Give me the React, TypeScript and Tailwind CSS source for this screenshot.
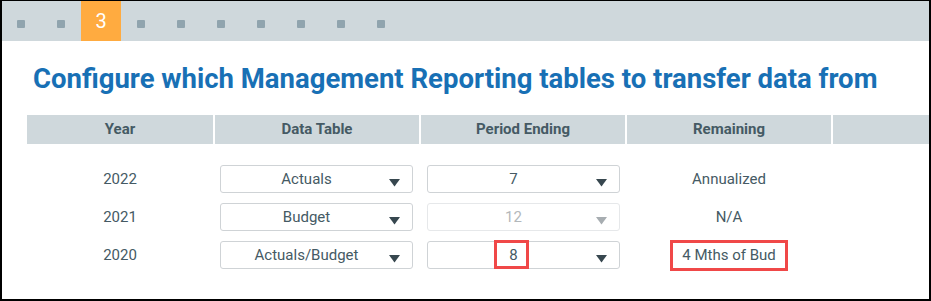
import React from "react";

const Arrow = ({ disabled }: { disabled?: boolean }) => (
  <svg width="11" height="8" viewBox="0 0 11 8" className="mt-[7px]">
    <polygon points="0,0 11,0 5.5,7.5" fill={disabled ? "#a7adb1" : "#37474f"} />
  </svg>
);

const Dropdown = ({
  value,
  disabled,
  ml,
  children,
}: {
  value: string;
  disabled?: boolean;
  ml: string;
  children?: React.ReactNode;
}) => (
  <div
    className={`relative flex h-[28px] w-[193px] items-center rounded-[3px] border bg-white ${ml} ${
      disabled ? "border-[#e6e8ea]" : "border-[#cfd3d6]"
    }`}
  >
    <div
      className={`w-[171px] text-center text-[15px] ${
        disabled ? "text-[#b3b8bb]" : "text-[#455a64]"
      }`}
    >
      {value}
    </div>
    <div className="absolute right-0 top-0 bottom-0 flex w-[36px] items-center justify-center">
      <Arrow disabled={disabled} />
    </div>
    {children}
  </div>
);

const rows = [
  { year: "2022", table: "Actuals", period: "7", remaining: "Annualized" },
  { year: "2021", table: "Budget", period: "12", remaining: "N/A", disabled: true },
  { year: "2020", table: "Actuals/Budget", period: "8", remaining: "4 Mths of Bud", mark: true },
];

export default function App() {
  return (
    <div
      className="h-[301px] w-[931px] overflow-hidden border-t border-l-2 border-r-2 border-b-2 border-black bg-white"
      style={{ fontFamily: "Roboto, 'Liberation Sans', sans-serif" }}
    >
      <div className="flex h-[40px] bg-[#cfd8dc] ml-[-1px]">
        {[1, 2, 3, 4, 5, 6, 7, 8, 9, 10].map((n) =>
          n === 3 ? (
            <div
              key={n}
              className="flex h-[40px] w-[40px] items-center justify-center bg-[#ffab40] text-[20px] text-white"
            >
              3
            </div>
          ) : (
            <div key={n} className="flex h-[40px] w-[40px] items-center justify-center">
              <div className="mt-[6px] h-[8px] w-[8px] rounded-[1px] bg-[#90a4ae]" />
            </div>
          )
        )}
      </div>

      <div className="pl-[31px] pt-[22px] text-[27.5px] font-bold leading-[32px] text-[#1870b5]">
        Configure which Management Reporting tables to transfer data from
      </div>

      <div className="mt-[20px] pl-[25px]">
        <div className="flex h-[29px] gap-[2px] text-[15px] font-bold text-[#455a64]">
          <div className="flex w-[186px] items-center justify-center bg-[#cfd8dc]">Year</div>
          <div className="flex w-[204px] items-center justify-center bg-[#cfd8dc]">Data Table</div>
          <div className="flex w-[204px] items-center justify-center bg-[#cfd8dc]">Period Ending</div>
          <div className="flex w-[204px] items-center justify-center bg-[#cfd8dc]">Remaining</div>
          <div className="flex-1 bg-[#cfd8dc]" />
        </div>

        <div className="pt-[16px]">
          {rows.map((r) => (
            <div key={r.year} className="flex h-[38px] items-center gap-[2px] text-[15px] text-[#455a64]">
              <div className="w-[186px] text-center">{r.year}</div>
              <div className="w-[204px]">
                <Dropdown value={r.table} ml="ml-[5px]" />
              </div>
              <div className="w-[204px]">
                <Dropdown value={r.period} ml="ml-[6px]" disabled={r.disabled}>
                  {r.mark && (
                    <div className="absolute left-[66px] top-[-2px] h-[29px] w-[35px] border-[3px] border-[#f04848]" />
                  )}
                </Dropdown>
              </div>
              <div className="flex w-[204px] justify-center">
                {r.mark ? (
                  <div className="flex h-[31px] items-center border-[3px] border-[#f04848] px-[9px]">
                    {r.remaining}
                  </div>
                ) : (
                  <div>{r.remaining}</div>
                )}
              </div>
            </div>
          ))}
        </div>
      </div>
    </div>
  );
}
